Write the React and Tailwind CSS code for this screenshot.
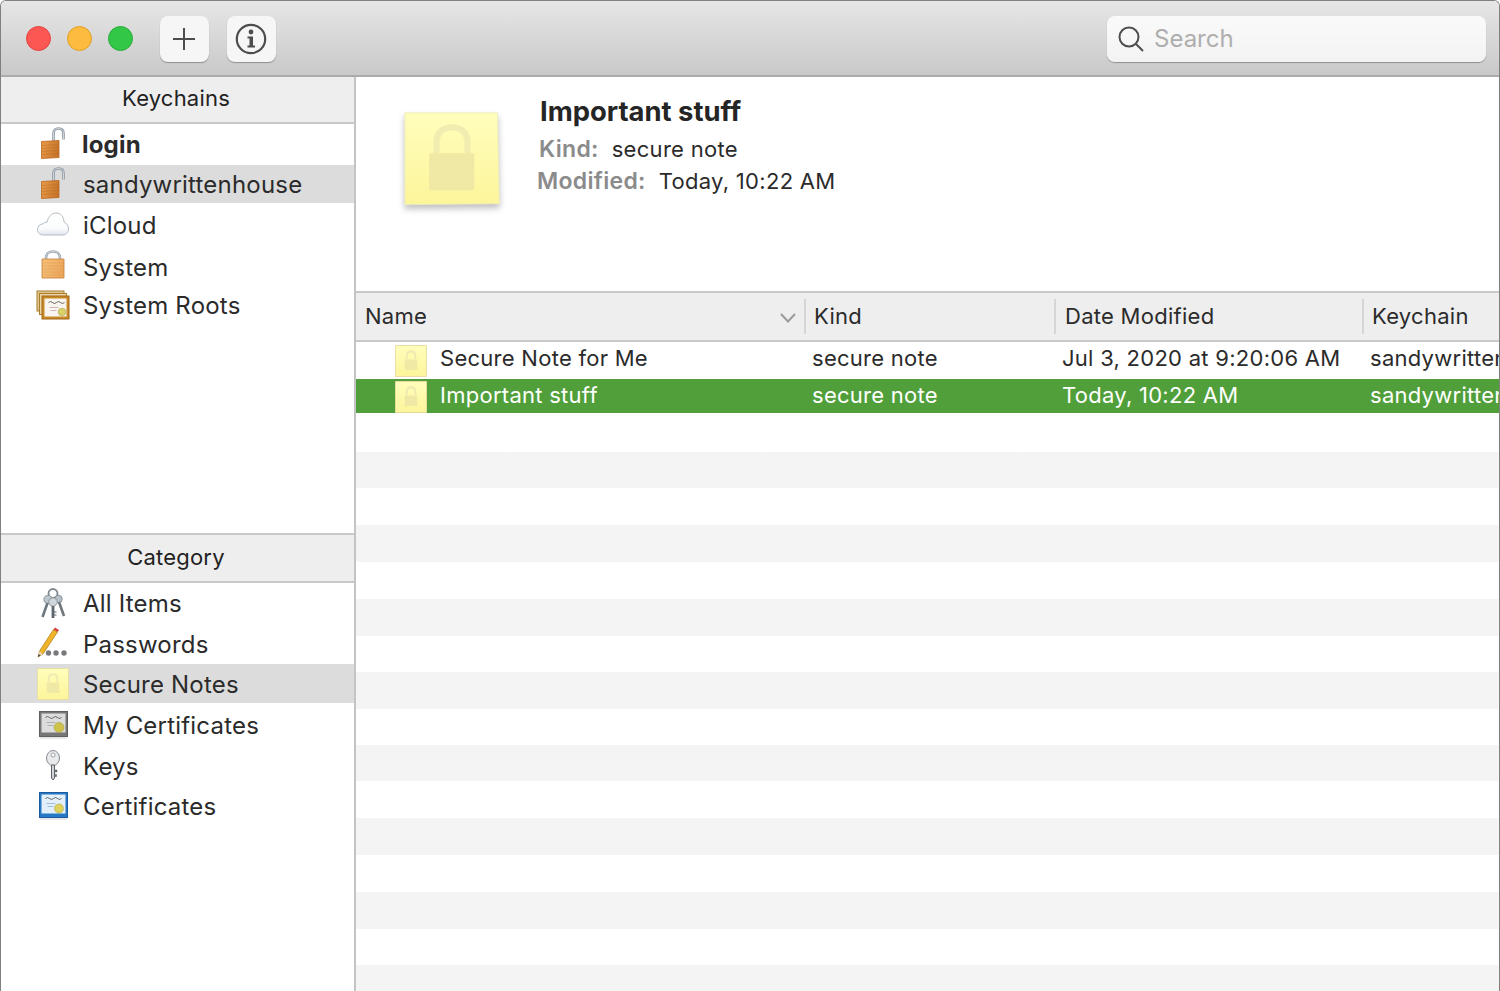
import React from "react";

const FONT = "font-['Inter','Noto_Sans',sans-serif]";

function LockIcon({ open }) {
  return (
    <svg width="34" height="34" viewBox="0 0 34 34">
      <defs>
        <linearGradient id={open ? "lockOpen" : "lockShut"} x1="0" x2="1" y1="0" y2="0.300">
          <stop offset="0" stopColor={open ? "#e89b49" : "#f6c27c"} />
          <stop offset="1" stopColor={open ? "#c9762a" : "#eda95e"} />
        </linearGradient>
      </defs>
      {open ? (
        <>
          <path d="M17.500 14V6.500C17.500 3.500 19 1.500 22.500 1.500S27.500 3.500 27.500 6.500V12.500" fill="none" stroke="#8f9aa6" strokeWidth="2.600" />
          <path d="M17.500 14V6.500C17.500 3.500 19 1.500 22.500 1.500S27.500 3.500 27.500 6.500V12.500" fill="none" stroke="#dfe4ea" strokeWidth="0.800" />
          <path d="M5.500 14.500L23 13.500V30.500L5.500 31.500Z" fill="url(#lockOpen)" stroke="#b9661c" strokeWidth="0.800" />
          <path d="M6 18.500L22.500 17.500M6 21.500L22.500 20.500M6 24.500L22.500 23.500M6 27.500L22.500 26.500" stroke="#a95c16" strokeOpacity="0.350" strokeWidth="0.800" />
        </>
      ) : (
        <>
          <path d="M10 10V8C10 4 13 1.500 17 1.500S24 4 24 8V10" fill="none" stroke="#9aa4ae" strokeWidth="2.600" />
          <path d="M10 10V8C10 4 13 1.500 17 1.500S24 4 24 8V10" fill="none" stroke="#e4e8ec" strokeWidth="0.800" />
          <path d="M6 9H28V28H6Z" fill="url(#lockShut)" stroke="#c77e33" strokeWidth="0.800" />
          <path d="M6.500 13H27.500M6.500 16H27.500M6.500 19H27.500M6.500 22H27.500M6.500 25H27.500" stroke="#c77e33" strokeOpacity="0.300" strokeWidth="0.800" />
        </>
      )}
    </svg>
  );
}

function CloudIcon() {
  return (
    <svg width="34" height="34" viewBox="0 0 34 34">
      <defs>
        <linearGradient id="cloudFill" x1="0" x2="0" y1="0" y2="1">
          <stop offset="0" stopColor="#ffffff" />
          <stop offset="0.700" stopColor="#fbfcfd" />
          <stop offset="1" stopColor="#dfe7ef" />
        </linearGradient>
      </defs>
      <path
        d="M7.500 27C3.500 27 1.500 24.500 1.500 21.500C1.500 18.500 4 16 7 15.800C8 14.500 9.500 14 11 14.300C12 8.500 16 5 20 5C25 5 28 9 28 14C30.500 15 32.500 18 32.500 21C32.500 24.500 30 27 26.500 27Z"
        fill="url(#cloudFill)"
        stroke="#b3bbc4"
        strokeWidth="1"
      />
    </svg>
  );
}

function CertPaper({ x, y, w, h, sealX, sealY, seal = "#d9d26a", paper = "#f8f4ef", ink = "#c9a5a5", sealR = 3.800 }) {
  return (
    <>
      <rect x={x} y={y} width={w} height={h} fill={paper} />
      <path d={`M${x + 4} ${y + 4}q2 -2 4 0t4 0t4 0t4 0`} fill="none" stroke="#555" strokeWidth="0.900" />
      <path d={`M${x + 5} ${y + 9}h9M${x + 6} ${y + 12}h6`} stroke={ink} strokeWidth="0.800" />
      <circle cx={sealX} cy={sealY} r={sealR} fill={seal} stroke="#9d9840" strokeWidth="0.500" />
    </>
  );
}

function RootsIcon() {
  return (
    <svg width="34" height="34" viewBox="0 0 34 34">
      <rect x="1" y="3" width="27" height="20" fill="#dfc68f" stroke="#a97c2c" />
      <rect x="3.500" y="5.500" width="27" height="21" fill="#ecd6a6" stroke="#a97c2c" />
      <rect x="6" y="8" width="27" height="23" fill="#c98a26" stroke="#a0671b" />
      <CertPaper x={8.500} y={10.500} w={22} h={18} sealX={26} sealY={24} />
    </svg>
  );
}

function FramedCertIcon({ frame, edge, seal, paper, ink, sealR }) {
  return (
    <svg width="34" height="34" viewBox="0 0 34 34">
      <rect x="3.500" y="3.500" width="28" height="25" fill={frame} stroke={edge} />
      <CertPaper x={5.500} y={5.500} w={24} h={19} sealX={23} sealY={19.500} seal={seal} paper={paper} ink={ink} sealR={sealR} />
      <path d="M4 30H31" stroke="#000" strokeOpacity="0.120" strokeWidth="1.500" />
    </svg>
  );
}

function KeysIcon() {
  return (
    <svg width="34" height="34" viewBox="0 0 34 34">
      <circle cx="17" cy="6.500" r="4.500" fill="none" stroke="#7f888f" strokeWidth="1.800" />
      <circle cx="22.500" cy="12" r="3.800" fill="#b6c0c8" stroke="#7d868e" strokeWidth="0.800" />
      <path d="M23 15L28 29" stroke="#6f777e" strokeWidth="2.600" />
      <circle cx="12" cy="12.500" r="4.200" fill="#bcc6cd" stroke="#7d868e" strokeWidth="0.800" />
      <path d="M11.500 16L6.500 30" stroke="#6f777e" strokeWidth="2.600" />
      <circle cx="17" cy="15" r="4.200" fill="#d0d7dc" stroke="#7d868e" strokeWidth="0.800" />
      <path d="M17 19V31" stroke="#5f666d" strokeWidth="2.800" />
      <path d="M18 25h2.500M18 28h2.500" stroke="#5f666d" strokeWidth="1.200" />
    </svg>
  );
}

function PasswordIcon() {
  return (
    <svg width="34" height="34" viewBox="0 0 34 34">
      <path d="M2 30L3.500 24L17.500 2.500L21.500 5L7 27Z" fill="#f0b429" stroke="#a8781a" strokeWidth="0.700" />
      <path d="M17.500 2.500L19 0.500L23 3L21.500 5Z" fill="#d6453a" />
      <path d="M2 30L3.500 24L7 27Z" fill="#e9d4ac" />
      <path d="M2 30L2.700 27.300L4.500 28.500Z" fill="#333" />
      <circle cx="12.500" cy="26" r="2.700" fill="#77797c" />
      <circle cx="20" cy="26" r="2.700" fill="#77797c" />
      <circle cx="28" cy="26" r="2.700" fill="#77797c" />
    </svg>
  );
}

function SingleKeyIcon() {
  return (
    <svg width="34" height="34" viewBox="0 0 34 34">
      <ellipse cx="17" cy="9" rx="6.500" ry="7.500" fill="#e8eaec" stroke="#858b91" strokeWidth="1" />
      <circle cx="17" cy="6" r="2" fill="#fff" stroke="#858b91" strokeWidth="0.800" />
      <path d="M15.500 16H18.500V29L17 31L15.500 29Z" fill="#d3d6d9" stroke="#5b6066" strokeWidth="1" />
      <path d="M18.500 21H21V23H18.500M18.500 25.500H20.500V27.500H18.500" fill="#777" stroke="#5b6066" strokeWidth="0.600" />
    </svg>
  );
}

function NoteIcon({ size, id, large }) {
  return (
    <svg width={size} height={large ? 94 : size} viewBox="0 0 34 34" preserveAspectRatio="none">
      <defs>
        <linearGradient id={id} x1="0" x2="0" y1="0" y2="1">
          <stop offset="0" stopColor="#fffebb" />
          <stop offset="1" stopColor="#fdf59b" />
        </linearGradient>
      </defs>
      <path
        d={large ? "M0.300 0.300H33.100L33.800 33.200L0.300 33.500Z" : "M0.500 0.500H33.500V33.500H0.500Z"}
        fill={`url(#${id})`}
        stroke={large ? "#ecebc0" : "#e9dca0"}
        strokeWidth={large ? 0.300 : 1}
      />
      {large ? (
        <>
          <path d="M11.500 15V11C11.500 7.300 14 5.500 17 5.500S22.500 7.300 22.500 11V15" fill="none" stroke="#f1ecb0" strokeWidth="2.200" />
          <rect x="8.900" y="14.900" width="16" height="13.400" rx="0.500" fill="#efe9a5" />
        </>
      ) : (
        <>
          <path d="M12.500 15V11.500C12.500 8.500 14.500 6.800 17 6.800S21.500 8.500 21.500 11.500V15" fill="none" stroke="#f0ebb0" strokeWidth="2.200" />
          <rect x="10.300" y="15.500" width="13.400" height="11" rx="0.600" fill="#efe9a5" />
        </>
      )}
    </svg>
  );
}

const keychains = [
  { label: "login", icon: <LockIcon open />, cls: "h-[41px] pb-[2px] font-bold", text: "ml-[12px] pt-[2px]" },
  { label: "sandywrittenhouse", icon: <LockIcon open />, cls: "h-[38px] bg-[#dcdcdc]" },
  { label: "iCloud", icon: <CloudIcon />, cls: "h-[44px]" },
  { label: "System", icon: <LockIcon />, cls: "h-[40px]" },
  { label: "System Roots", icon: <RootsIcon />, cls: "h-[36px]" },
];

const categories = [
  { label: "All Items", icon: <KeysIcon />, cls: "h-[41px]", text: "ml-[13px] mb-[1px] pt-[2px]" },
  { label: "Passwords", icon: <PasswordIcon />, cls: "h-[40px]" },
  { label: "Secure Notes", icon: <NoteIcon size={32} id="noteSide" />, cls: "h-[39px] bg-[#dcdcdc]" },
  {
    label: "My Certificates",
    icon: <FramedCertIcon frame="#777777" edge="#5f5f5f" seal="#cfc24a" paper="#dcdcdc" ink="#a5a5a5" sealR={5} />,
    cls: "h-[43px]",
  },
  { label: "Keys", icon: <SingleKeyIcon />, cls: "h-[39px]" },
  {
    label: "Certificates",
    icon: <FramedCertIcon frame="#2677c4" edge="#1c5c9c" seal="#dcd25c" paper="#e3f0fb" ink="#8fb4d8" sealR={4.500} />,
    cls: "h-[42px]",
  },
];

function SideRow({ item }) {
  return (
    <div className={`flex items-center pl-[35px] text-[24px] tracking-[0.2px] text-[#2b2b2b] ${item.cls}`}>
      <span className="flex h-[34px] w-[34px] shrink-0 items-center justify-center">{item.icon}</span>
      <span className={item.text || "ml-[13px] pt-[2px]"}>{item.label}</span>
    </div>
  );
}

function SideHeader({ children, height }) {
  return (
    <div className={`flex items-center justify-center border-y-2 border-[#c9c9c9] bg-[#eeeeee] pb-[2px] pr-[3px] text-[22px] tracking-[0.2px] text-[#222] ${height}`}>
      {children}
    </div>
  );
}

function Sidebar() {
  return (
    <aside className="flex w-[355px] shrink-0 flex-col border-r-2 border-[#c4c4c4]">
      <SideHeader height="h-[47px] border-t-0">Keychains</SideHeader>
      <div className="h-[409px]">
        {keychains.map((item) => (
          <SideRow key={item.label} item={item} />
        ))}
      </div>
      <SideHeader height="h-[50px]">Category</SideHeader>
      <div>
        {categories.map((item) => (
          <SideRow key={item.label} item={item} />
        ))}
      </div>
    </aside>
  );
}

function Toolbar() {
  return (
    <header className="flex h-[76px] shrink-0 items-center border-b-2 border-[#ababab] bg-gradient-to-b from-[#e6e6e6] to-[#c9c9c9] pl-[25px] pr-[12px]">
      <span className="h-[25px] w-[25px] rounded-full border border-[#e5443f] bg-[#fc5753]" />
      <span className="ml-[16px] h-[25px] w-[25px] rounded-full border border-[#dfa023] bg-[#fdbc40]" />
      <span className="ml-[16px] h-[25px] w-[25px] rounded-full border border-[#2aac3a] bg-[#33c748]" />
      <button className="ml-[27px] mt-[2px] flex h-[46px] w-[49px] items-center justify-center rounded-[8px] bg-[#f6f6f6] pr-[1px] shadow-[0_1px_1px_rgba(0,0,0,0.3)]">
        <svg width="24" height="24" viewBox="0 0 24 24" stroke="#4d4d4d" strokeWidth="2">
          <path d="M12 1V23M1 12H23" />
        </svg>
      </button>
      <button className="ml-[18px] mt-[2px] flex h-[46px] w-[49px] items-center justify-center rounded-[8px] bg-[#f6f6f6] pr-[1px] shadow-[0_1px_1px_rgba(0,0,0,0.3)]">
        <svg width="32" height="32" viewBox="0 0 32 32">
          <circle cx="16" cy="16" r="14.200" fill="none" stroke="#4d4d4d" strokeWidth="2.200" />
          <circle cx="16" cy="9" r="2.400" fill="#4d4d4d" />
          <path d="M12.500 13.500H18V22.500H20V24.500H12.500V22.500H14.500V15.500H12.500Z" fill="#4d4d4d" />
        </svg>
      </button>
      <div className="ml-auto mr-[1px] mt-[2px] flex h-[46px] w-[379px] items-center rounded-[8px] bg-gradient-to-b from-[#fafafa] to-[#f3f3f3] pl-[10px] shadow-[0_1px_1px_rgba(0,0,0,0.3)]">
        <svg width="28" height="28" viewBox="0 0 28 28" fill="none" stroke="#4d4d4d" strokeWidth="2">
          <circle cx="12" cy="12" r="9.500" />
          <path d="M19 19L26 26" />
        </svg>
        <span className="ml-[9px] text-[24px] text-[#aeaeae]">Search</span>
      </div>
    </header>
  );
}

function Detail() {
  return (
    <section className="flex h-[214px] shrink-0 pl-[48px]">
      <div className="mt-[35px] h-[94px] w-[97px] shrink-0 drop-shadow-[0_4px_3px_rgba(0,0,0,0.25)]">
        <NoteIcon size={96} id="noteLarge" large />
      </div>
      <div className="ml-[38px] mt-[18px] text-[22px] leading-[32px] tracking-[0.3px] text-[#2b2b2b]">
        <h1 className="ml-[1px] h-[38px] text-[27.400px] font-bold tracking-normal text-[#252525]">Important stuff</h1>
        <p>
          <span className="text-[23px] font-semibold text-[#8b8b8b]">Kind:</span>
          <span className="ml-[13px]">secure note</span>
        </p>
        <p className="-ml-[2px]">
          <span className="text-[23px] font-semibold text-[#8b8b8b]">Modified:</span>
          <span className="ml-[13px]">Today, 10:22 AM</span>
        </p>
      </div>
    </section>
  );
}

const columns = "grid grid-cols-[450px_250px_308px_1fr]";

function HeadCell({ children, last, sort, pad = "pl-[8px]" }) {
  return (
    <div className={`flex h-[35px] items-center justify-between ${pad} ${last ? "" : "border-r-2 border-[#d6d6d6]"}`}>
      <span>{children}</span>
      {sort && (
        <svg className="mr-[8px] mt-[3px]" width="16" height="10" viewBox="0 0 16 10" fill="none" stroke="#9a9a9a" strokeWidth="2">
          <path d="M1 1L8 8.500L15 1" />
        </svg>
      )}
    </div>
  );
}

function TableRow({ selected, name, kind, date, keychain, height, id, textPad }) {
  return (
    <div className={`${columns} items-center whitespace-nowrap ${height} ${selected ? "bg-[#519f3a] text-white" : "text-[#2b2b2b]"}`}>
      <div className="flex items-center pl-[39px]">
        <NoteIcon size={32} id={id} />
        <span className={`ml-[13px] ${textPad}`}>{name}</span>
      </div>
      <div className={`pl-[6px] ${textPad}`}>{kind}</div>
      <div className={`pl-[6px] ${textPad}`}>{date}</div>
      <div className={`overflow-hidden pl-[6px] ${textPad}`}>{keychain}</div>
    </div>
  );
}

function Table() {
  return (
    <section className="min-h-0 flex-1 overflow-hidden text-[22px] tracking-[0.27px]">
      <div className={`${columns} h-[51px] items-center border-y-2 border-[#c9c9c9] bg-[#eeeeee] text-[#2b2b2b]`}>
        <HeadCell sort pad="pl-[9px]">Name</HeadCell>
        <HeadCell>Kind</HeadCell>
        <HeadCell pad="pl-[9px]">Date Modified</HeadCell>
        <HeadCell last>Keychain</HeadCell>
      </div>
      <TableRow id="noteRowA" textPad="pb-[5px]" name="Secure Note for Me" kind="secure note" date="Jul 3, 2020 at 9:20:06 AM" keychain="sandywrittenhouse" height="h-[37px]" />
      <TableRow id="noteRowB" textPad="pb-[2px]" selected name="Important stuff" kind="secure note" date="Today, 10:22 AM" keychain="sandywrittenhouse" height="h-[34px]" />
      <div className="h-[39px]" />
      {[0, 1, 2, 3, 4, 5, 6, 7].map((n) => (
        <div key={n} className="h-[73.300px] bg-gradient-to-b from-[#f4f4f4] from-50% to-white to-50%" />
      ))}
    </section>
  );
}

export default function App() {
  return (
    <div className={`flex h-[991px] w-[1500px] flex-col overflow-hidden rounded-t-[6px] border-x border-t border-[#808080] bg-white ${FONT}`}>
      <Toolbar />
      <div className="flex min-h-0 flex-1">
        <Sidebar />
        <main className="flex min-w-0 flex-1 flex-col">
          <Detail />
          <Table />
        </main>
      </div>
    </div>
  );
}
